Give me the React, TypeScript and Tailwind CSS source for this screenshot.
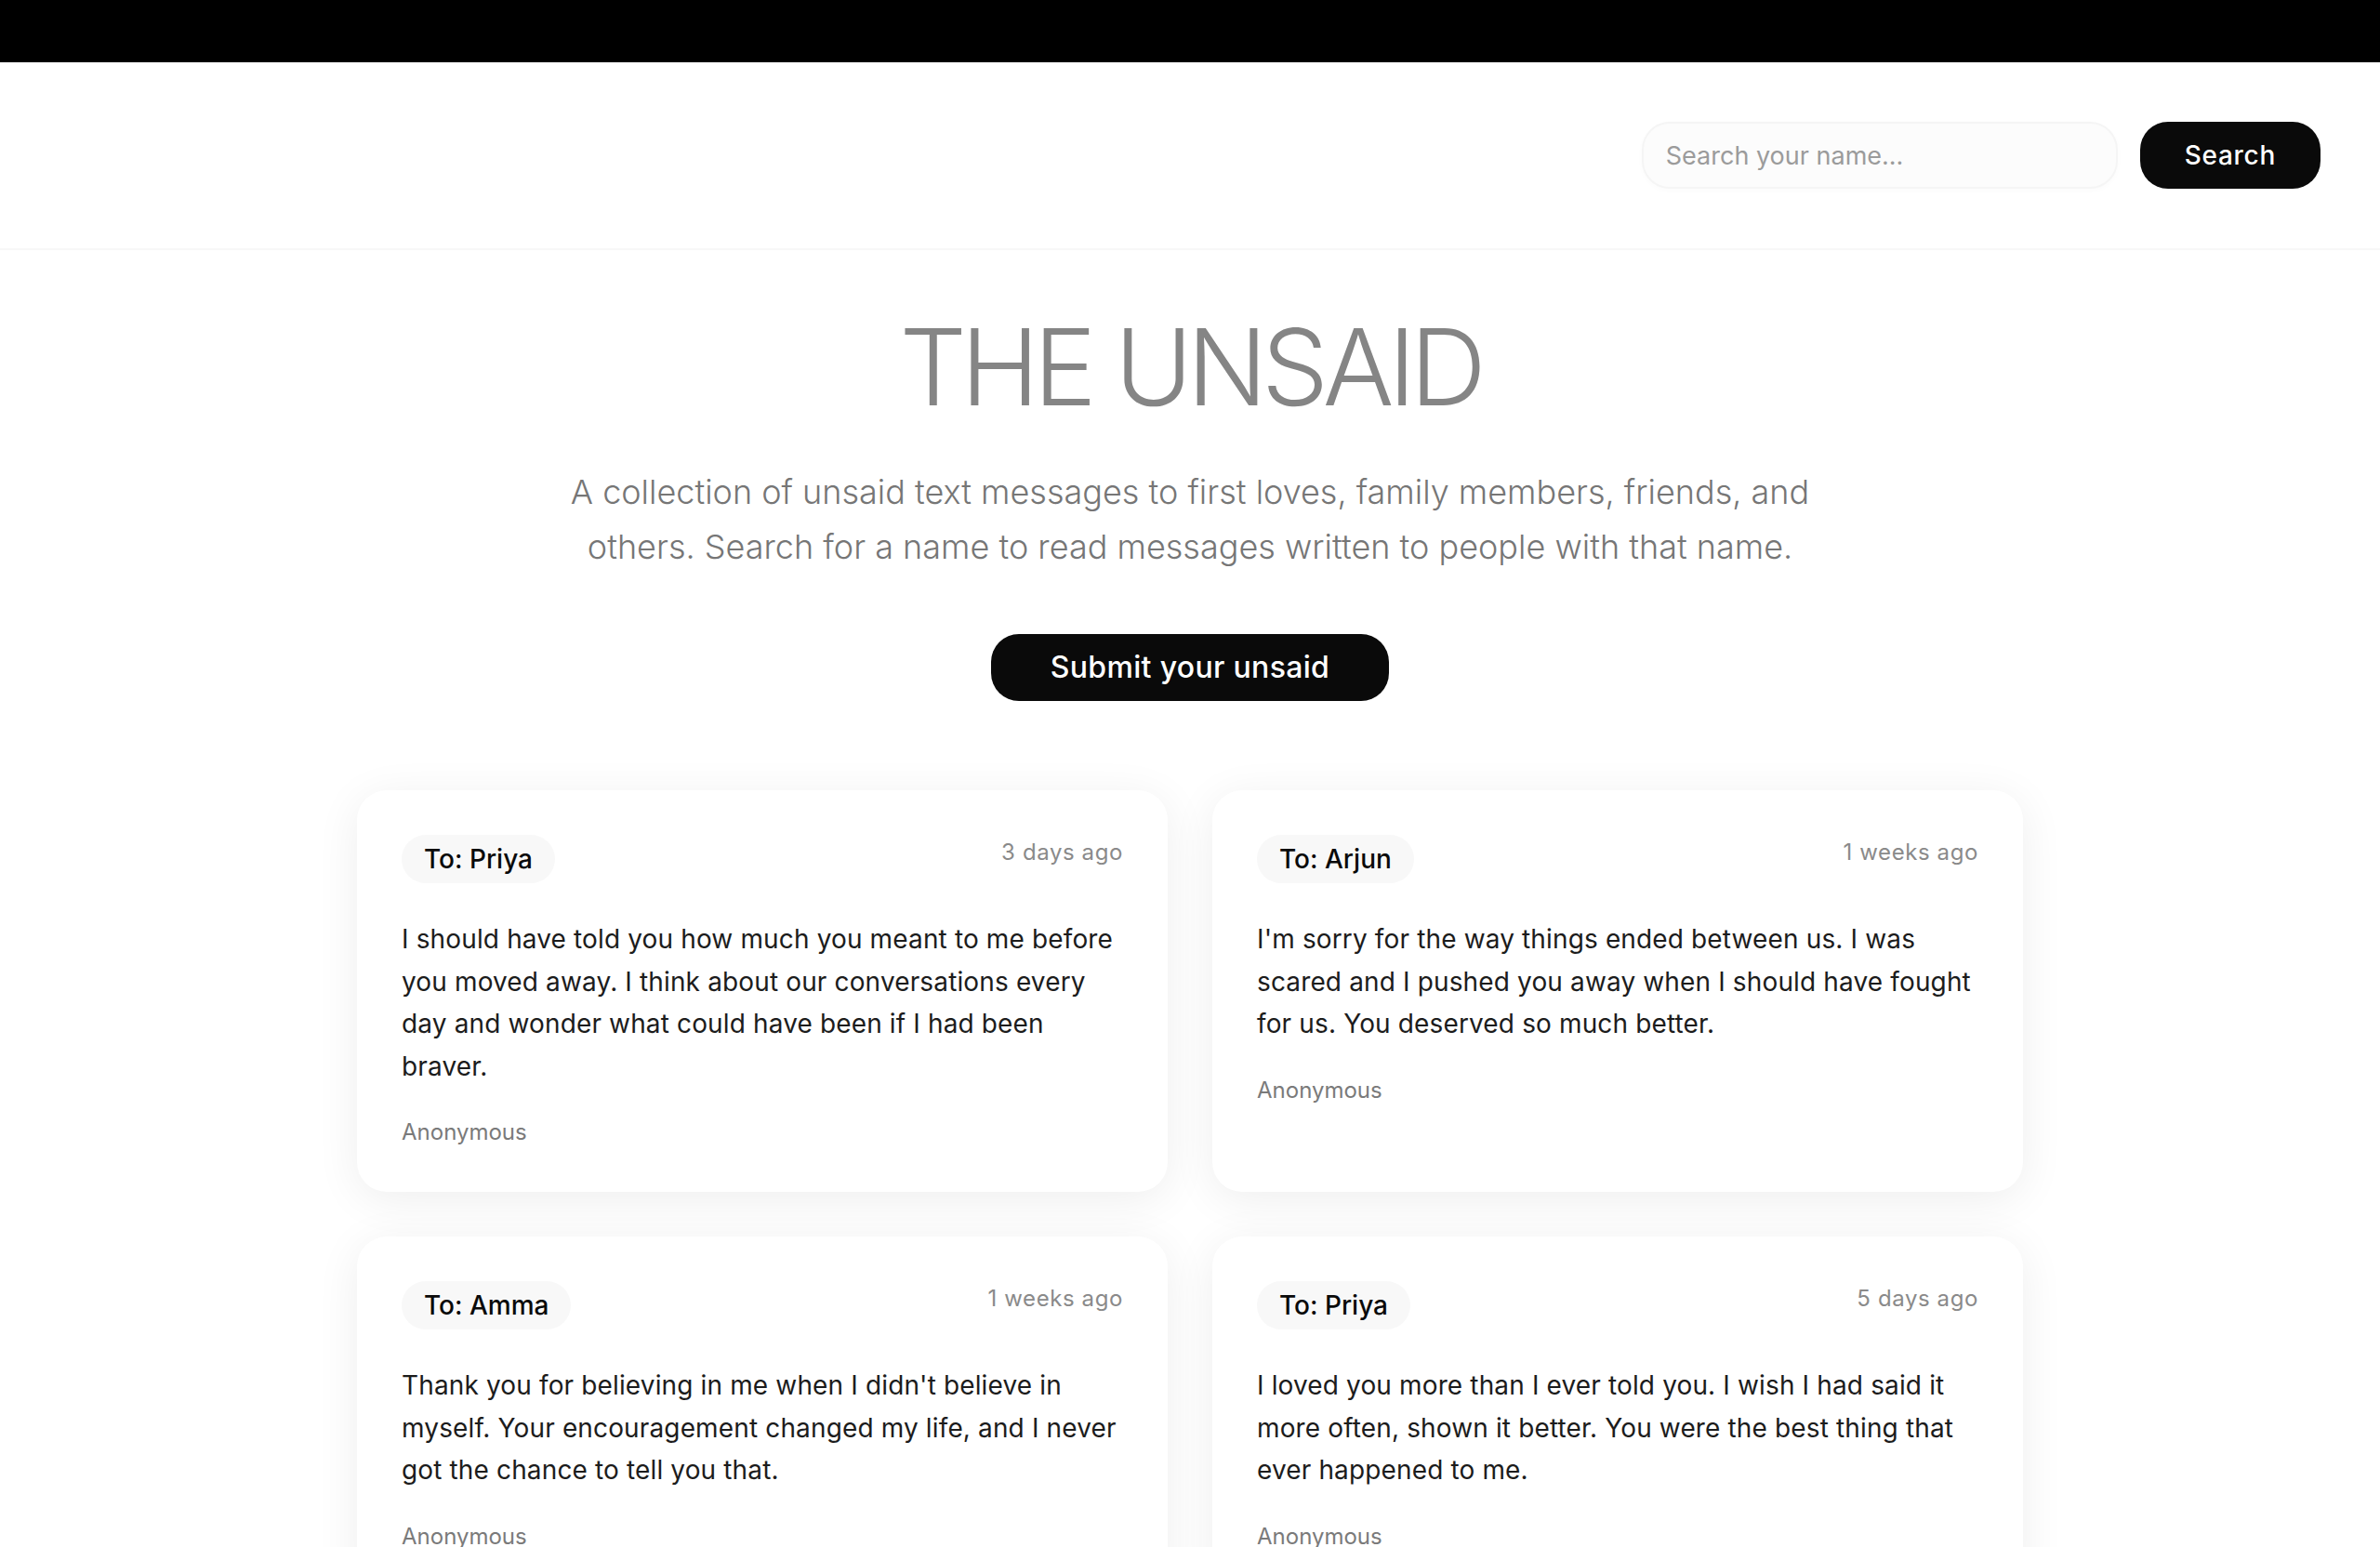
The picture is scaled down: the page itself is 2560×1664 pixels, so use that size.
import React, { useState } from 'react';

type Message = {
  id: number;
  to: string;
  when: string;
  body: string;
  from: string;
};

const MESSAGES: Message[] = [
  {
    id: 1,
    to: 'Priya',
    when: '3 days ago',
    body: 'I should have told you how much you meant to me before you moved away. I think about our conversations every day and wonder what could have been if I had been braver.',
    from: 'Anonymous',
  },
  {
    id: 2,
    to: 'Arjun',
    when: '1 weeks ago',
    body: "I'm sorry for the way things ended between us. I was scared and I pushed you away when I should have fought for us. You deserved so much better.",
    from: 'Anonymous',
  },
  {
    id: 3,
    to: 'Amma',
    when: '1 weeks ago',
    body: "Thank you for believing in me when I didn't believe in myself. Your encouragement changed my life, and I never got the chance to tell you that.",
    from: 'Anonymous',
  },
  {
    id: 4,
    to: 'Priya',
    when: '5 days ago',
    body: 'I loved you more than I ever told you. I wish I had said it more often, shown it better. You were the best thing that ever happened to me.',
    from: 'Anonymous',
  },
];

const MessageCard: React.FC<{ message: Message }> = ({ message }) => (
  <div className="bg-white rounded-[32px] p-12 shadow-[0_8px_48px_rgba(0,0,0,0.07)]">
    <div className="flex items-start justify-between mb-[38px]">
      <span className="inline-flex items-center h-[52px] px-6 rounded-[26px] bg-[#f8f8f8] text-[28px] font-medium text-[#0a0a0a]">
        To: {message.to}
      </span>
      <span className="mt-[3px] text-[24px] leading-8 tracking-wide text-[#8a8a8a]">{message.when}</span>
    </div>
    <p className="text-[28px] leading-[45.5px] tracking-[0.005em] text-[#1c1c1c]">{message.body}</p>
    <p className="mt-8 text-[24px] leading-8 text-[#7a7a7a]">{message.from}</p>
  </div>
);

const App: React.FC = () => {
  const [query, setQuery] = useState('');

  return (
    <div className="min-h-screen bg-white font-['Inter','Noto_Sans',sans-serif]">
      <div className="h-[67px] bg-black" />

      <header className="flex items-center justify-end gap-6 px-16 py-16 border-b-2 border-[#f7f7f7]">
        <input
          value={query}
          onChange={e => setQuery(e.target.value)}
          placeholder="Search your name..."
          className="w-[512px] h-[72px] px-6 rounded-[30px] bg-[#fcfcfc] border-2 border-[#f5f5f5] text-[27px] text-[#111] placeholder:text-[#9b9b9b] outline-none shadow-[0_2px_6px_rgba(0,0,0,0.02)]"
        />
        <button className="h-[72px] px-12 rounded-[30px] bg-[#0a0a0a] text-white text-[28px] font-medium tracking-wide">
          Search
        </button>
      </header>

      <main className="flex flex-col items-center pt-14 pb-24">
        <h1 className="text-[114px] leading-[140px] font-light tracking-[-0.055em] text-[#858585]">THE UNSAID</h1>
        <p className="mt-[35px] max-w-[1344px] text-center text-[36px] leading-[59px] font-light text-[#767676]">
          A collection of unsaid text messages to first loves, family members, friends, and others. Search for a name to read messages written to people with that name.
        </p>
        <button className="mt-16 h-[72px] px-16 rounded-[30px] bg-[#0a0a0a] text-white text-[32px] font-medium tracking-[0.01em]">
          Submit your unsaid
        </button>

        <div className="mt-24 grid grid-cols-2 gap-12 w-[1792px]">
          {MESSAGES.map(m => (
            <MessageCard key={m.id} message={m} />
          ))}
        </div>
      </main>
    </div>
  );
};

export default App;
